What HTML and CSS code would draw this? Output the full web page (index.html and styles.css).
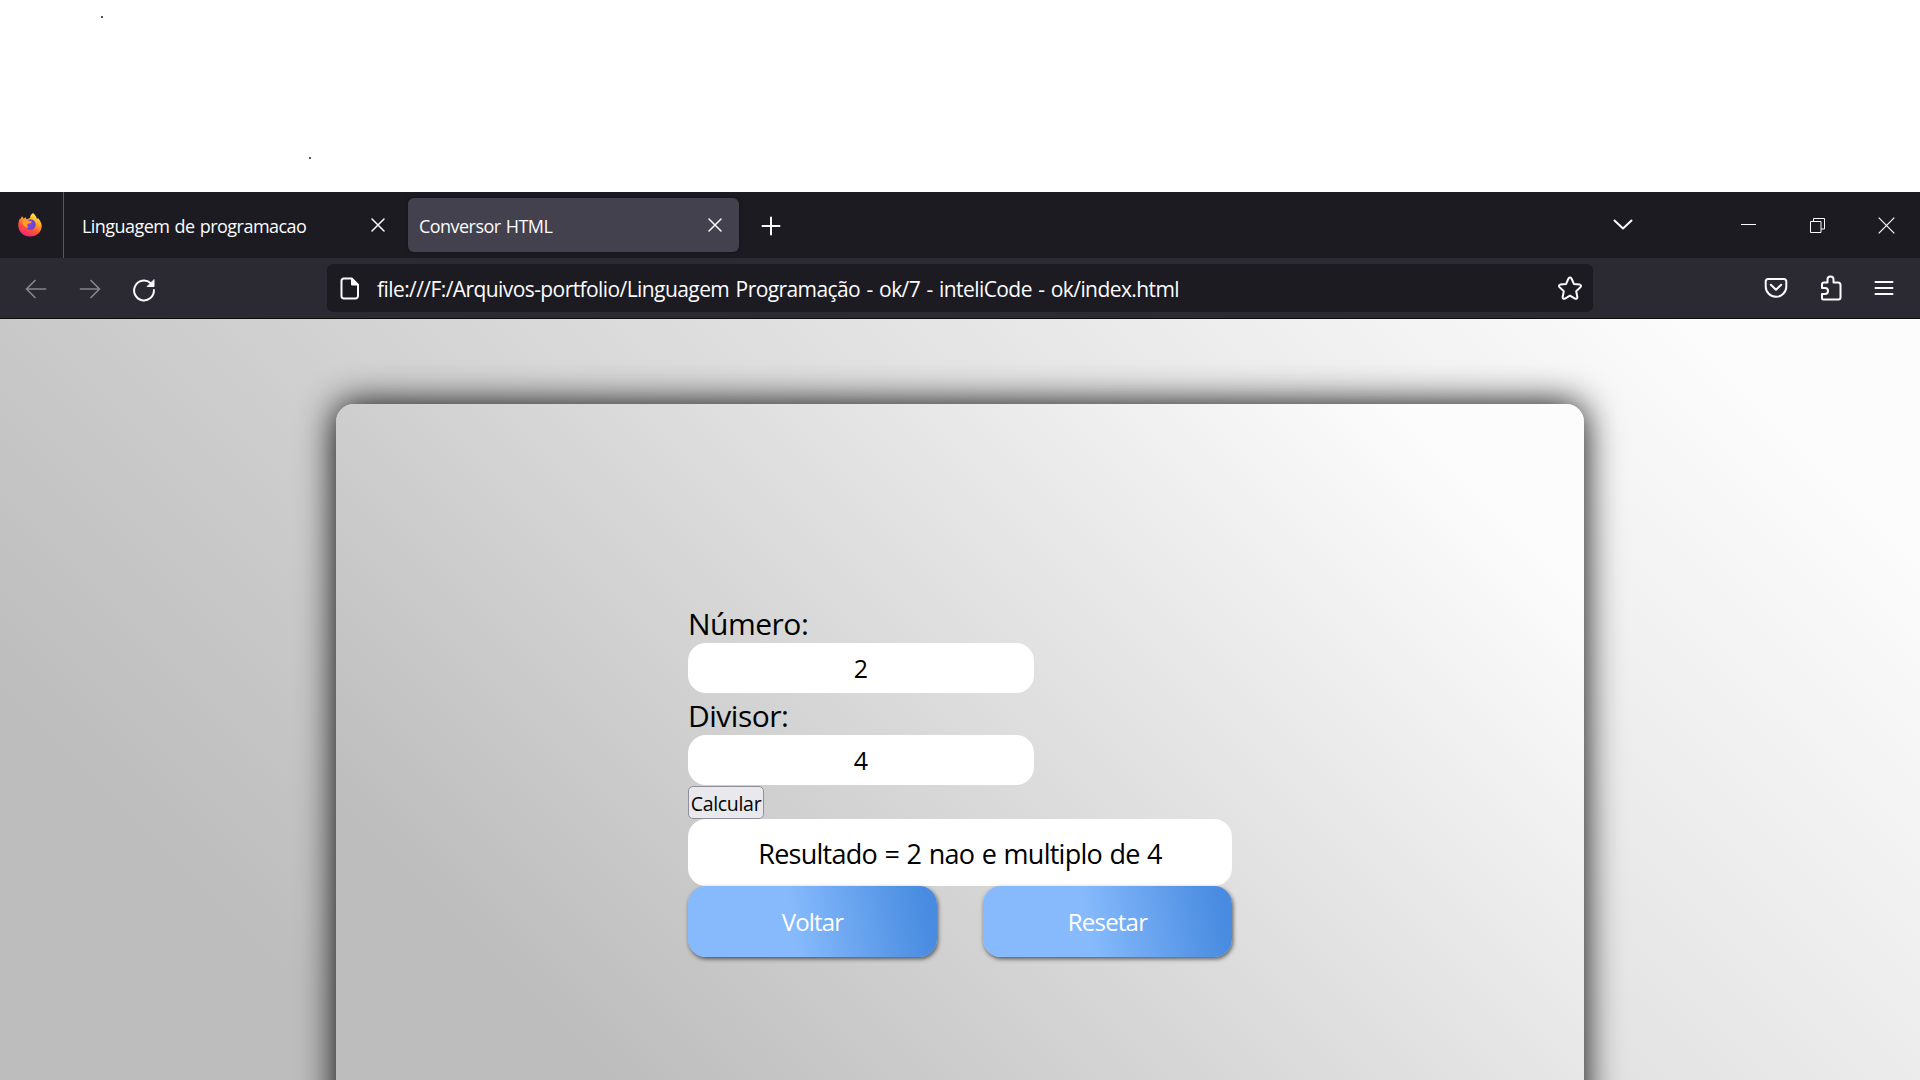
FILE: index.html
```html
<!DOCTYPE html>
<html lang="pt-BR">
<head>
<meta charset="utf-8">
<title>Conversor HTML</title>
<link rel="stylesheet" href="styles.css">
</head>
<body>
<div class="blank"><i class="speck speck-a"></i><i class="speck speck-b"></i></div>
<header class="tabbar">
  <div class="brand">
    <svg width="24" height="25" viewBox="0 0 24 25">
      <defs>
        <linearGradient id="fire" x1=".8" y1="0" x2=".3" y2="1"><stop offset="0" stop-color="#fff44f"/><stop offset=".35" stop-color="#ffab2b"/><stop offset=".65" stop-color="#ff5634"/><stop offset="1" stop-color="#f5217c"/></linearGradient>
        <radialGradient id="globe"><stop offset="0" stop-color="#8a45dc"/><stop offset="1" stop-color="#6044c8"/></radialGradient>
      </defs>
      <path fill="url(#fire)" d="M15 1c2 1.500 3.500 3.500 4 6l1-1c2.500 3 4 6 3.700 9-.6 5.500-5.500 9.500-11.700 9.500C5.500 24.500.5 20 .3 13.500.2 10 1 8 2.300 6l.2 1.500L4 4l1.500 2.500L8 5.300l.3 2.200L12 6c0-2 1-4 3-5z"/>
      <circle cx="12.500" cy="12.500" r="5.200" fill="url(#globe)"/>
      <path fill="#ff9a2e" d="M4 8.500c2-1.500 5-1.500 7 .2l3 .8c-.5 1.500-2 2-4 2.300-1 .9-.8 2.700.8 3.900-3 .5-6.300-2-6.800-7.200z"/>
    </svg>
  </div>
  <div class="tab">
    <span class="tab-title">Linguagem de programacao</span>
    <svg class="tab-close" width="14" height="14" viewBox="0 0 14 14"><path d="M1 1l12 12M13 1L1 13"/></svg>
  </div>
  <div class="tab tab-active">
    <span class="tab-title">Conversor HTML</span>
    <svg class="tab-close" width="14" height="14" viewBox="0 0 14 14"><path d="M1 1l12 12M13 1L1 13"/></svg>
  </div>
  <svg class="new-tab" width="20" height="20" viewBox="0 0 20 20"><path d="M10 1.500v17M1.500 10h17"/></svg>
  <div class="window-controls">
    <svg class="chevron" width="20" height="12" viewBox="0 0 20 12"><path d="M1.500 1.500L10 9.500l8.500-8"/></svg>
    <svg class="thin" width="15" height="15" viewBox="0 0 15 15"><path d="M0 6.500h15"/></svg>
    <svg class="thin" width="15" height="15" viewBox="0 0 15 15"><path d="M.5 3.500h10.500v11H.5zM3.500 3.500V.5h11v10.500h-3.500"/></svg>
    <svg class="thin close" width="17" height="17" viewBox="0 0 17 17"><path d="M.7.700l15.600 15.600M16.300.700L.7 16.300"/></svg>
  </div>
</header>
<nav class="toolbar">
  <svg class="dim" width="22" height="20" viewBox="0 0 22 20"><path d="M10 1.500L1.500 10l8.500 8.500M1.500 10h19"/></svg>
  <svg class="dim" width="22" height="20" viewBox="0 0 22 20"><path d="M12 1.500l8.500 8.500-8.500 8.500M20.500 10h-19"/></svg>
  <svg class="reload" width="24" height="24" viewBox="0 0 24 24"><path d="M18.500 5A9.900 9.900 0 1 0 21.900 12"/><path class="solid" d="M22 2v6.500h-6.500z"/></svg>
  <div class="urlbar">
    <svg width="20" height="23" viewBox="0 0 20 23"><path d="M3.500 1.500h8.200L18 7.800v11.200a2.500 2.500 0 0 1-2.500 2.500h-12A2.500 2.500 0 0 1 1.500 19V4a2.500 2.500 0 0 1 2-2.500z"/><path class="solid" d="M11.500 1.500V8H18z"/></svg>
    <span class="url">file:///F:/Arquivos-portfolio/Linguagem Programação - ok/7 - inteliCode - ok/index.html</span>
    <svg width="26" height="25" viewBox="0 0 26 25"><path d="M11.500 2.500q1.500-2 3 0l2.400 5.400 5.900.7q2 .7.700 2.500l-4.300 4.200 1.200 5.900q-.2 2.200-2.400 1.400L13 19.700l-5 2.900q-2.200.8-2.400-1.400l1.200-5.900-4.300-4.200q-1.300-1.800.7-2.500l5.900-.7z"/></svg>
  </div>
  <div class="actions">
    <svg width="24" height="22" viewBox="0 0 24 22"><path d="M4 2h16a2.300 2.300 0 0 1 2.300 2.300V9.500a10.300 10.300 0 0 1-20.600 0V4.300A2.300 2.300 0 0 1 4 2zM6.800 7.800L12 12.800l5.200-5"/></svg>
    <svg width="22" height="26" viewBox="0 0 22 26"><path d="M2 13V9.500Q2 7.500 4 7.500h3.500v-3a3 3 0 0 1 6 0v3h4.500q2.500 0 2.500 2.500v12.500q0 2-2 2H3.500Q2 24.500 2 23v-4h3a2.700 2.700 0 0 0 0-6z"/></svg>
    <svg width="20" height="16" viewBox="0 0 20 16"><path d="M1.500 2h17M1.500 8h17M1.500 14h17"/></svg>
  </div>
</nav>
<main class="page">
  <section class="card">
    <form class="form">
      <label class="label">Número:</label>
      <div class="field">2</div>
      <label class="label">Divisor:</label>
      <div class="field">4</div>
      <button type="button" class="calc">Calcular</button>
      <output class="result">Resultado = 2 nao e multiplo de 4</output>
      <div class="buttons">
        <button type="button" class="btn">Voltar</button>
        <button type="button" class="btn">Resetar</button>
      </div>
    </form>
  </section>
</main>
</body>
</html>
```
FILE: styles.css
```css
* { box-sizing: border-box; }
body {
  margin: 0;
  height: 1080px;
  overflow: hidden;
  display: flex;
  flex-direction: column;
  background: #fff;
  font-family: "Segoe UI", "Open Sans", "Noto Sans", sans-serif;
}
svg { display: block; flex: none; fill: none; stroke: #fbfbfe; stroke-width: 2; stroke-linecap: round; stroke-linejoin: round; }
svg .solid { fill: #fbfbfe; stroke-width: 1; }
.blank { position: relative; flex: none; height: 192px; }
.speck { position: absolute; width: 2px; height: 2px; background: #555; }
.speck-a { left: 101px; top: 16px; }
.speck-b { left: 309px; top: 157px; }

.tabbar { flex: none; height: 66px; display: flex; align-items: center; background: #1c1b22; color: #fbfbfe; }
.brand { width: 64px; height: 66px; border-right: 1px solid #5a5961; padding: 20px 0 0 18px; }
.brand svg { stroke: none; }
.tab { width: 344px; height: 54px; display: flex; align-items: center; justify-content: space-between; padding: 0 23px 0 18px; border-radius: 6px; }
.tab-active { width: 331px; background: #42414d; padding: 0 17px 0 11px; box-shadow: 0 0 4px rgba(0, 0, 0, .4); }
.tab-title { font-size: 18px; letter-spacing: -.54px; word-spacing: 1px; white-space: nowrap; padding-top: 1px; }
.tab-close { stroke-width: 1.500; }
.new-tab { margin: 2px 0 0 22px; }
.window-controls { margin-left: auto; display: flex; align-items: center; padding-right: 25px; }
.chevron { margin-right: 108px; }
.thin { stroke-width: 1; stroke-linecap: butt; stroke-linejoin: miter; margin-right: 54px; }
.thin.close { stroke-width: 1.200; margin: 0 0 0 -1px; }

.toolbar { flex: none; height: 61px; display: flex; align-items: center; background: #2b2a33; border-bottom: 1px solid #0c0c0d; padding: 0 26px 0 25px; }
.dim { stroke: #85848b; stroke-width: 1.700; margin: 2px 32px 0 0; }
.reload { margin: 3px 171px 0 -1px; }
.urlbar { width: 1266px; height: 48px; border-radius: 6px; background: #1c1b22; display: flex; align-items: center; padding: 0 10px 0 13px; }
.url { margin-left: 17px; padding-top: 2px; flex: 1; white-space: nowrap; font-size: 21px; color: #fbfbfe; letter-spacing: -.58px; word-spacing: 1.500px; }
.actions { margin-left: auto; display: flex; align-items: center; gap: 32px; }

.page {
  flex: 1;
  min-height: 0;
  overflow: hidden;
  display: flex;
  padding: 85px 336px 0;
  background: linear-gradient(45deg, #bdbdbd 20%, #fcfcfc 92%) 0 0 / 100% 940px no-repeat;
}
.card {
  flex: 1;
  margin-bottom: -60px;
  border-radius: 18px 18px 0 0;
  background: linear-gradient(45deg, #bdbdbd 20%, #fcfcfc 91%) 0 0 / 100% 808px no-repeat;
  box-shadow: 0 0 36px #000;
  padding: 200px 0 0 352px;
}
.form { width: 544px; display: flex; flex-direction: column; align-items: flex-start; color: #000; }
.label { height: 39px; line-height: 40px; font-size: 30px; letter-spacing: -.5px; }
.field { width: 346px; height: 50px; border-radius: 18px; background: #fff; font-size: 25px; line-height: 51px; text-align: center; }
.field + .label { height: 42px; line-height: 46px; }
.calc { width: 76px; height: 33px; margin: 1px 0 0; padding: 2px 0 0; border: 1px solid #8f8f9d; border-radius: 5px; background: #e9e9ed; color: #000; font: 19.500px/29px "Segoe UI", "Open Sans", "Noto Sans", sans-serif; letter-spacing: -.3px; white-space: nowrap; }
.result { width: 544px; height: 67px; border-radius: 18px; background: #fff; text-align: center; font-size: 27px; line-height: 69px; letter-spacing: -.75px; word-spacing: 1.200px; white-space: nowrap; }
.buttons { width: 544px; display: flex; justify-content: space-between; }
.btn { width: 249px; height: 71px; padding: 0; border: 0; border-radius: 18px; color: #fff; background: linear-gradient(80deg, #86bafc 42%, #488be0 95%); box-shadow: 1px 2px 4px rgba(0, 0, 0, .6); font: 24px/71px "Segoe UI", "Open Sans", "Noto Sans", sans-serif; letter-spacing: -.8px; }
```
